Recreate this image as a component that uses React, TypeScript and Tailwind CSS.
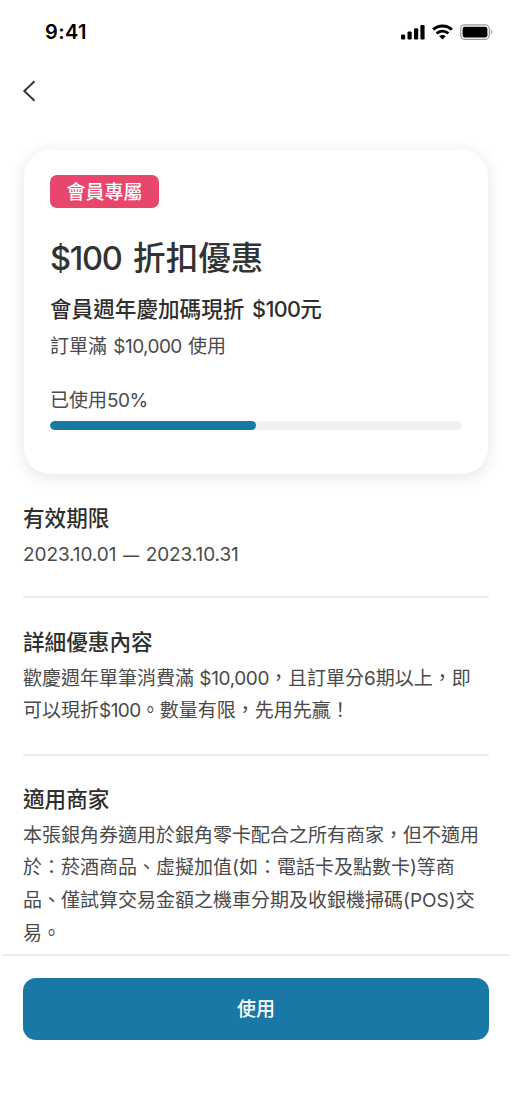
import type { ReactNode } from 'react';

const Latin = ({ children }: { children: ReactNode }) => (
  <span className="tracking-[-0.03em]">{children}</span>
);

function StatusBar() {
  return (
    <header className="flex h-16 items-center justify-between pr-[19px] pl-[45px] text-black">
      <span className="text-[20px] leading-[24px] font-semibold tracking-[0.02em]">9:41</span>
      <div className="flex items-center gap-[7px]">
        <svg width="24" height="16" viewBox="0 0 24 16" fill="currentColor">
          <rect x="0" y="10.4" width="4.2" height="5.1" rx="1.2" />
          <rect x="6.5" y="7.4" width="4.2" height="8.1" rx="1.2" />
          <rect x="13" y="4.2" width="4.2" height="11.3" rx="1.2" />
          <rect x="19.4" y="1" width="4.2" height="14.5" rx="1.2" />
        </svg>
        <svg width="21" height="16" viewBox="0 0 21 16" fill="none" stroke="currentColor">
          <path d="M1.2 5.6C6.4 0.8 14.6 0.8 19.8 5.6" strokeWidth="3" />
          <path d="M4.6 9.4C8 6.4 13 6.4 16.4 9.4" strokeWidth="2.8" />
          <path d="M10.5 15.4L7.2 12.3C9.1 10.6 11.9 10.6 13.8 12.3Z" fill="currentColor" stroke="none" />
        </svg>
        <svg width="33" height="16" viewBox="0 0 33 16">
          <rect x="0.7" y="0.9" width="28.6" height="14.4" rx="4" fill="none" stroke="#9b9b9b" strokeWidth="1.2" />
          <rect x="2.6" y="2.8" width="24.8" height="10.6" rx="2.2" fill="#000" />
          <path d="M30.8 5.6V10.6C32.8 9.7 32.8 6.5 30.8 5.6Z" fill="#a6a6a6" />
        </svg>
      </div>
    </header>
  );
}

function Section({ title, children }: { title: string; children: ReactNode }) {
  return (
    <section>
      <h3 className="text-[21.6px] leading-[33px] font-medium text-[#2f2f2f]">{title}</h3>
      <p className="mt-[4px] text-[19px] leading-[32.75px] text-[#4a4a4a]">{children}</p>
    </section>
  );
}

export default function App() {
  const used = 50;
  return (
    <div className="flex h-[1108px] w-[512px] flex-col overflow-hidden bg-white font-['Inter','Noto_Sans_CJK_TC',sans-serif]">
      <StatusBar />
      <nav className="flex h-[54px] items-center pl-[22px]">
        <button aria-label="返回">
          <svg width="14" height="22" viewBox="0 0 14 22" fill="none" stroke="#333" strokeWidth="1.9">
            <path d="M12.5 1.3L2.3 11L12.5 20.7" />
          </svg>
        </button>
      </nav>
      <main className="flex-1 overflow-hidden px-[23px] pt-8">
        <article className="mx-px h-[324px] w-[464px] rounded-[26px] bg-white px-[26px] pt-[25px] shadow-[0_3px_16px_rgba(30,35,60,0.12)]">
          <div className="flex h-[33px] w-[109px] items-center justify-center rounded-[7px] bg-[#e8466d] pt-[3px] text-[19px] font-medium text-white">
            會員專屬
          </div>
          <h1 className="mt-[26px] text-[32.6px] leading-[49px] font-medium text-[#333] [word-spacing:3px]">
            <span className="tracking-[-0.04em]">$100</span> 折扣優惠
          </h1>
          <h2 className="mt-[10px] text-[21.6px] leading-[33px] font-medium text-[#2f2f2f] [word-spacing:2px]">
            會員週年慶加碼現折 <Latin>$100</Latin>元
          </h2>
          <p className="mt-[4px] text-[19px] leading-[33px] text-[#4a4a4a] [word-spacing:1px]">
            訂單滿 <Latin>$10,000</Latin> 使用
          </p>
          <p className="mt-[21px] text-[19px] leading-[33px] text-[#4a4a4a]">
            已使用<Latin>{used}%</Latin>
          </p>
          <div className="mt-[4px] h-[9px] overflow-hidden rounded-full bg-[#f0f1f4]">
            <div className="h-full rounded-full bg-[#1978a5]" style={{ width: `${used}%` }} />
          </div>
        </article>
        <div className="mt-[28px]">
          <Section title="有效期限">
            <span className="tracking-[-0.005em] [word-spacing:1.5px]">
              2023.10.01 <span className="text-[16px] font-medium">—</span> 2023.10.31
            </span>
          </Section>
          <hr className="mt-[24.25px] mb-[27.5px] border-t-2 border-[#ececef]" />
          <Section title="詳細優惠內容">
            歡慶週年單筆消費滿 <span className="tracking-[-0.02em]">$10,000</span>，且訂單分6期以上，即
            <br />
            可以現折<Latin>$100</Latin>。數量有限，先用先贏！
          </Section>
          <hr className="mt-[26px] mb-[26.5px] border-t-2 border-[#ececef]" />
          <Section title="適用商家">
            本張銀角券適用於銀角零卡配合之所有商家，但不適用於：菸酒商品、虛擬加值(如：電話卡及點數卡)等商品、僅試算交易金額之機車分期及收銀機掃碼(POS)交易。
          </Section>
        </div>
      </main>
      <footer className="mx-[2px] h-[154px] border-t-2 border-[#ececef] bg-white px-[21px] pt-[22px]">
        <button className="flex h-[62px] w-full items-center justify-center rounded-[13px] bg-[#1978a5] pt-[2px] text-[19px] font-medium text-white">
          使用
        </button>
      </footer>
    </div>
  );
}
